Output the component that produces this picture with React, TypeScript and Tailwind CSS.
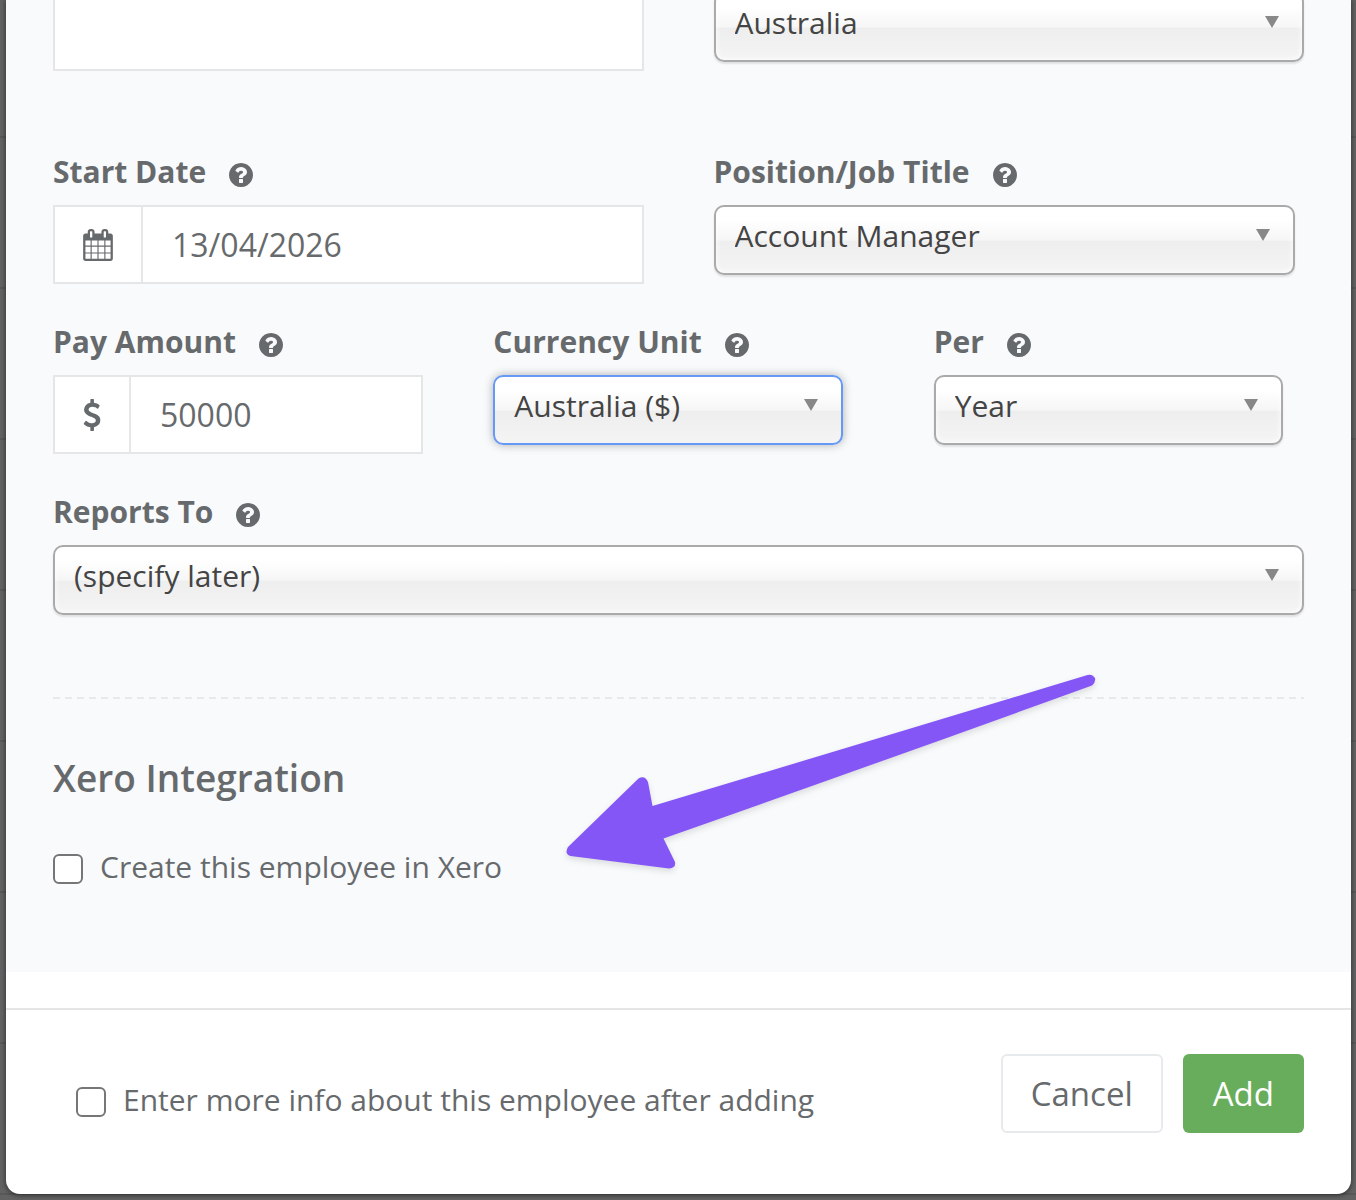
import { useId } from "react";
import type { ReactNode } from "react";

function QuestionCircle() {
  return (
    <svg viewBox="128 128 1536 1536" className="size-6" fill="currentColor" aria-hidden="true">
      <path d="M1024 1376v-192q0-14-9-23t-23-9h-192q-14 0-23 9t-9 23v192q0 14 9 23t23 9h192q14 0 23-9t9-23zm256-672q0-88-55.5-163t-138.5-116-170-41q-243 0-371 213-15 24 8 42l132 100q7 6 19 6 16 0 25-12 53-68 86-92 34-24 86-24 48 0 85.500 26t37.500 59q0 38-20 61t-68 45q-63 28-115.500 86.500t-52.500 125.500v36q0 14 9 23t23 9h192q14 0 23-9t9-23q0-19 21.500-49.500t54.500-49.500q32-18 49-28.500t46-35 44.500-48 28-60.500 12.500-81zm384 192q0 209-103 385.500t-279.500 279.500-385.500 103-385.500-103-279.500-279.500-103-385.500 103-385.500 279.500-279.500 385.500-103 385.500 103 279.500 279.500 103 385.500z" />
    </svg>
  );
}

function CalendarIcon() {
  return (
    <svg viewBox="0 0 1792 1792" className="size-8" fill="currentColor" aria-hidden="true">
      <path d="M192 1664h288v-288h-288v288zm352 0h320v-288h-320v288zm-352-352h288v-320h-288v320zm352 0h320v-320h-320v320zm-352-384h288v-288h-288v288zm736 736h320v-288h-320v288zm-384-736h320v-288h-320v288zm768 736h288v-288h-288v288zm-384-352h320v-320h-320v320zm-352-864v-288q0-13-9.500-22.500t-22.500-9.500h-64q-13 0-22.500 9.500t-9.500 22.500v288q0 13 9.500 22.500t22.500 9.500h64q13 0 22.500-9.500t9.500-22.500zm736 864h288v-320h-288v320zm-384-384h320v-288h-320v288zm384 0h288v-288h-288v288zm32-480v-288q0-13-9.500-22.500t-22.500-9.500h-64q-13 0-22.500 9.500t-9.500 22.500v288q0 13 9.500 22.500t22.500 9.500h64q13 0 22.500-9.500t9.500-22.500zm384-64v1280q0 52-38 90t-90 38h-1408q-52 0-90-38t-38-90v-1280q0-52 38-90t90-38h128v-96q0-66 47-113t113-47h64q66 0 113 47t47 113v96h384v-96q0-66 47-113t113-47h64q66 0 113 47t47 113v96h128q52 0 90 38t38 90z" />
    </svg>
  );
}

function DollarIcon() {
  return (
    <svg viewBox="0 0 1792 1792" className="size-8" fill="currentColor" aria-hidden="true">
      <path d="M1362 1185q0 153-99.500 263.500t-258.500 136.500v175q0 14-9 23t-23 9h-135q-13 0-22.500-9.500t-9.500-22.500v-175q-66-9-127.500-31t-101.500-44.500-74-48-46.500-37.500-17.500-18q-17-21-2-41l103-135q7-10 23-12 15-2 24 9l2 2q113 99 243 125 37 8 74 8 81 0 142.500-43t61.500-122q0-28-15-53t-33.500-42-58.500-37.500-66-32-80-32.500q-39-16-61.500-25t-61.500-26.500-62.500-31-56.500-35.500-53.500-42.500-43.500-49-35.500-58-21-66.500-8.500-78q0-138 98-242t255-134v-180q0-13 9.500-22.500t22.500-9.500h135q14 0 23 9t9 23v176q57 6 110.500 23t87 33.500 63.500 37.500 39 29 15 14q17 18 5 38l-81 146q-8 15-23 16-14 3-27-7-3-3-14.500-12t-39-26.500-58.500-32-74.500-26-85.500-11.500q-95 0-155 43t-60 111q0 26 8.500 48t29.500 41.500 39.500 33 56 31 60.500 27 70 27.500q53 20 81 31.500t76 35 75.500 42.500 62 50 53 63.500 31.500 76.500 13 94z" />
    </svg>
  );
}

function FieldLabel({ htmlFor, children }: { htmlFor: string; children: ReactNode }) {
  return (
    <div className="mb-[13px] flex h-10 items-center gap-[23px]">
      <label htmlFor={htmlFor} className="text-[30px] leading-10 font-bold whitespace-nowrap">
        {children}
      </label>
      <button type="button" aria-label="Help" className="mt-1.5 shrink-0">
        <QuestionCircle />
      </button>
    </div>
  );
}

function SelectBox({ id, value, active = false, label }: { id?: string; value: string; active?: boolean; label?: string }) {
  return (
    <div className="relative">
      <select
        id={id}
        aria-label={label}
        defaultValue={value}
        className={
          "block h-[70px] w-full appearance-none rounded-[10px] border-2 bg-[linear-gradient(to_bottom,#ffffff_20%,#f6f6f6_50%,#eeeeee_52%,#f4f4f4_100%)] pr-14 pb-2.5 pl-[19px] text-[30px] text-[#444444] outline-none " +
          (active
            ? "border-[#6699f5] shadow-[0_0_10px_rgba(0,0,0,0.3)]"
            : "border-[#aaaaaa] shadow-[inset_0_0_6px_#ffffff,0_2px_2px_rgba(0,0,0,0.1)]")
        }
      >
        <option>{value}</option>
      </select>
      <svg viewBox="0 0 14 12" className="pointer-events-none absolute top-6 right-[25px] h-3 w-3.5" aria-hidden="true">
        <path d="M0 0h14L7 12z" fill="#888888" />
      </svg>
    </div>
  );
}

function AddonInput({ id, value, icon, pad }: { id: string; value: string; icon: ReactNode; pad: string }) {
  return (
    <div className="flex h-[79px] border-2 border-[#e5e6e7] bg-white">
      <span className={"flex shrink-0 items-center border-r-2 border-[#e5e6e7] " + pad}>{icon}</span>
      <input id={id} type="text" defaultValue={value} className="w-full min-w-0 pl-[29px] text-[32px] outline-none" />
    </div>
  );
}

function CheckRow({ children }: { children: ReactNode }) {
  const id = useId();
  return (
    <div className="flex items-center gap-[17px]">
      <input
        id={id}
        type="checkbox"
        className="mt-1 size-[30px] shrink-0 appearance-none rounded-md border-2 border-[#767676] bg-white"
      />
      <label htmlFor={id} className="text-[30px] leading-10">
        {children}
      </label>
    </div>
  );
}

function PointerArrow() {
  return (
    <svg
      viewBox="560 660 550 220"
      className="pointer-events-none absolute -top-[39px] left-[507px] h-[220px] w-[550px] drop-shadow-[0_3px_3px_rgba(0,0,0,0.12)]"
      aria-hidden="true"
    >
      <path
        d="M1087.500 675 Q870 741 652.500 806 L648 782 Q645 775 638.500 778.500 L568 847 Q564 854 570.500 856 L669 868.500 Q676 868 675 862 L663.500 838.500 Q878 763 1092 685.500 Q1096 682 1095 678 Q1092 673.500 1087.500 675 Z"
        fill="#8456f6"
      />
    </svg>
  );
}

export default function App() {
  return (
    <div className="min-h-screen overflow-hidden bg-[#626262] bg-[repeating-linear-gradient(to_bottom,transparent_0px,transparent_136px,#585858_136px,#585858_138px,transparent_138px,transparent_151px)] pr-[5px] pb-1.5 pl-1.5 font-['Open_Sans','Noto_Sans',sans-serif] text-[#676a6c]">
      <form
        className="overflow-hidden rounded-b-[14px] bg-white shadow-[0_1px_4px_1px_rgba(0,0,0,0.4)]"
        onSubmit={(e) => e.preventDefault()}
      >
        <div className="bg-[#f9fafc] px-[47px] pb-[85px]">
          <div className="-mt-2 grid grid-cols-2 gap-[70px]">
            <input type="text" aria-label="State" className="h-[79px] w-full border-2 border-[#e5e6e7] bg-white px-5 text-[32px] outline-none" />
            <SelectBox label="Country" value="Australia" />
          </div>

          <div className="mt-[81px] grid grid-cols-2 gap-[70px]">
            <div>
              <FieldLabel htmlFor="start-date">Start Date</FieldLabel>
              <AddonInput id="start-date" value="13/04/2026" icon={<CalendarIcon />} pad="px-[27px]" />
            </div>
            <div className="pr-[9px]">
              <FieldLabel htmlFor="position">Position/Job Title</FieldLabel>
              <SelectBox id="position" value="Account Manager" />
            </div>
          </div>

          <div className="mt-[38px] grid grid-cols-3 gap-[70px]">
            <div>
              <FieldLabel htmlFor="pay">Pay Amount</FieldLabel>
              <AddonInput id="pay" value="50000" icon={<DollarIcon />} pad="px-[21px]" />
            </div>
            <div className="pr-[21px]">
              <FieldLabel htmlFor="currency">Currency Unit</FieldLabel>
              <SelectBox id="currency" value="Australia ($)" active />
            </div>
            <div className="pr-[21px]">
              <FieldLabel htmlFor="per">Per</FieldLabel>
              <SelectBox id="per" value="Year" />
            </div>
          </div>

          <div className="mt-[38px]">
            <FieldLabel htmlFor="reports">Reports To</FieldLabel>
            <SelectBox id="reports" value="(specify later)" />
          </div>

          <div className="mt-[82px] h-0.5 bg-[repeating-linear-gradient(to_right,#e7eaec_0px,#e7eaec_7px,transparent_7px,transparent_12px)]" />

          <section className="relative pt-[54px]">
            <h3 className="mb-11 text-[37px] leading-[50px] font-semibold">Xero Integration</h3>
            <CheckRow>Create this employee in Xero</CheckRow>
            <PointerArrow />
          </section>
        </div>

        <footer className="mt-9 flex items-center justify-between border-t-2 border-[#e5e5e5] px-[47px] pt-11 pb-[61px]">
          <div className="pt-[13px] pl-[23px]">
            <CheckRow>Enter more info about this employee after adding</CheckRow>
          </div>
          <div className="flex gap-5">
            <button type="button" className="h-[79px] rounded-md border-2 border-[#e7eaec] bg-white px-7 text-[33px] leading-10">
              Cancel
            </button>
            <button type="submit" className="h-[79px] rounded-md bg-[#68ad5c] px-[30px] text-[33px] leading-10 text-white">
              Add
            </button>
          </div>
        </footer>
      </form>
    </div>
  );
}
